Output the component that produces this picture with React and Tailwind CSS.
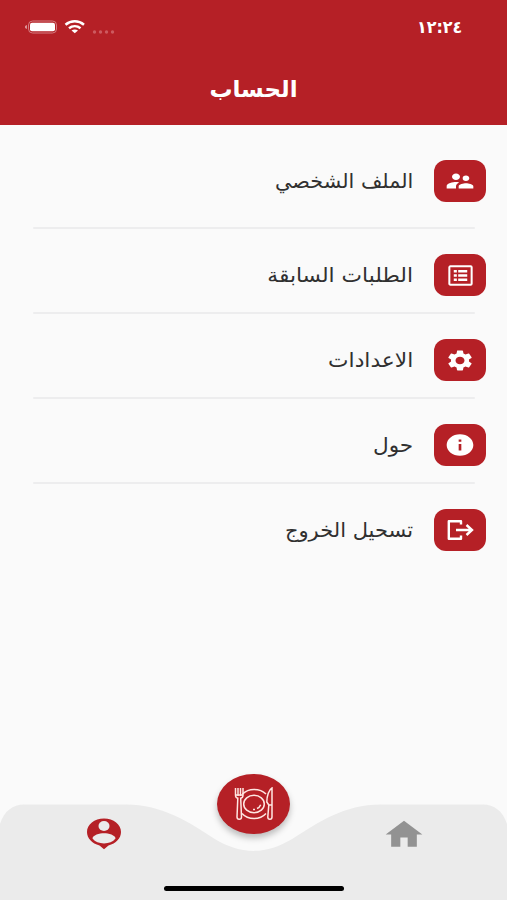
import { MdHome, MdInfo, MdSettings, MdSupervisorAccount } from "react-icons/md";

const ListIcon = ({ className }) => (
    <svg viewBox="0 0 26 22" className={className} fill="none" stroke="currentColor" preserveAspectRatio="none">
        <rect x="1.4" y="1.4" width="23.2" height="19.2" rx="1" strokeWidth="2.1" />
        <path d="M6 6.5h3.2M6 11h3.2M6 15.5h3.2M10.6 6.5H20M10.6 11H20M10.6 15.5H20" strokeWidth="2.7" />
    </svg>
);

const ExitIcon = ({ className }) => (
    <svg viewBox="0 0 26 20" className={className} fill="none" stroke="currentColor" strokeWidth="2.4">
        <path d="M13.5 4.500V1.200H1.300v17.600h12.200v-3.300" strokeLinejoin="round" />
        <path d="M8.500 10h16M19 5l5.500 5-5.500 5" />
    </svg>
);

const PinIcon = ({ className }) => (
    <svg viewBox="0 0 34 32" className={className}>
        <path fill="currentColor" d="M17 .5C7.400.5 0 6.500 0 14c0 6.200 5 11.600 12.500 13.400L17 31.300l4.500-3.900C29 25.600 34 20.200 34 14 34 6.500 26.600.5 17 .5Z" />
        <ellipse cx="17" cy="8" rx="5.500" ry="5" fill="#ebebeb" />
        <path fill="#ebebeb" d="M5.500 20.500c0-3.400 7-5.300 11.500-5.300s11.500 1.900 11.500 5.300C26 23.800 21.700 25.400 17 25.400S8 23.800 5.500 20.500Z" />
    </svg>
);

const PlateIcon = ({ className }) => (
    <svg viewBox="0 0 40 34" className={className} fill="none" stroke="currentColor" strokeWidth="1.500">
        <path d="M8.500 7C11.500 4 15.500 2.400 20 2.400c5 0 9 1.500 12 4.600M8 26.500c3 3.300 7.500 5 12 5s9-1.700 12-5" />
        <ellipse cx="20" cy="17" rx="10.300" ry="8.700" />
        <path d="M19 22.500h2M23 21.500c1.800-.8 3-2 3.700-3.800" />
        <path d="M1.500 1v7c0 2 1 3 2.300 3.200L3 30c0 3 4.500 3 4.500 0l-.8-18.800C8 11 9 10 9 8V1M4 1v8M6.500 1v8M1.500 8H9" />
        <path d="M38 1c-3 1.500-5.200 8-5.200 14l2 3-1 12c0 3 4.200 3 4.200 0V1Z" />
        <path d="M34.500 18H38" />
    </svg>
);

const menu = [
    { label: "الملف الشخصي", Icon: MdSupervisorAccount, icon: "w-8 h-[26px]", text: "scale-x-[1.037]" },
    { label: "الطلبات السابقة", Icon: ListIcon, icon: "w-[25px] h-[21px]", text: "scale-x-[1.088]" },
    { label: "الاعدادات", Icon: MdSettings, icon: "w-[30px] h-[25px]", text: "scale-x-[1.088]" },
    { label: "حول", Icon: MdInfo, icon: "w-8 h-[26px]", text: "scale-x-[1.08]" },
    { label: "تسحيل الخروج", Icon: ExitIcon, icon: "w-[27px] h-5", text: "scale-x-[1.05]" },
];

const App = () => {
    return (
        <div
            dir="rtl"
            className="relative flex flex-col w-[507px] h-[900px] overflow-hidden bg-[#fafafa] font-['DejaVu_Sans',sans-serif]"
        >
            {/* Header */}
            <header className="h-[125px] shrink-0 bg-[#b52026] text-white">
                <div className="flex items-center justify-between h-[54px] pr-[45px] pl-6">
                    <span className="text-[17px] font-bold leading-none origin-right scale-x-[0.94]">١٢:٢٤</span>
                    <div dir="ltr" className="flex items-center">
                        <svg viewBox="0 0 92 18" className="w-[92px] h-[18px]" fill="none">
                            <path d="M2.500 7v4C1 10.500 1 7.500 2.500 7Z" fill="#fff" />
                            <rect x="4.500" y="3" width="28" height="12" rx="4" stroke="#d47c80" />
                            <rect x="6" y="4.800" width="25" height="8.500" rx="2" fill="#fff" />
                            <path d="M41.500 6.700c5.500-4.600 13-4.600 18.500 0M45 10.200c3.400-2.700 8.100-2.700 11.500 0" stroke="#fff" strokeWidth="2.500" />
                            <path d="M47.500 12.500c2-1.500 4.500-1.500 6.500 0L50.800 15.200Z" fill="#fff" />
                            <g fill="#cd5a5f">
                                <circle cx="70.500" cy="14" r="1.700" />
                                <circle cx="76.500" cy="14" r="1.700" />
                                <circle cx="82.500" cy="14" r="1.700" />
                                <circle cx="88.500" cy="14" r="1.700" />
                            </g>
                        </svg>
                    </div>
                </div>
                <h1 className="text-center text-[23px] leading-[70px] font-bold">
                    <span className="inline-block">الحساب</span>
                </h1>
            </header>

            {/* Menu */}
            <ul className="flex flex-col pt-[10px] text-[#303030]">
                {menu.map(({ label, Icon, icon, text }, i) => (
                    <li key={label}>
                        <div className={`flex items-center gap-[21px] pr-[21px] pt-[25px] ${i === 0 ? "pb-[25px]" : "pb-4"}`}>
                            <div className="flex items-center justify-center w-[52px] h-[42px] rounded-[12px] bg-[#b52026] text-white">
                                <Icon className={icon} preserveAspectRatio="none" />
                            </div>
                            <span className={`text-[20px] leading-none origin-right ${text}`}>{label}</span>
                        </div>
                        {i < menu.length - 1 && <div className="h-[2px] mr-8 ml-[33px] rounded bg-[#ededee]" />}
                    </li>
                ))}
            </ul>

            {/* Bottom navigation */}
            <nav dir="ltr" className="relative mt-auto h-24 shrink-0">
                <svg viewBox="0 0 507 96" className="absolute inset-0 w-full h-full">
                    <path fill="#ebebeb" d="M0 96V20C4 7 13 .5 24 .5h102c36 0 64 18 88 34 27 16.500 52 16.500 79 0 25-16 51-34 88-34h102c11 0 20 6.500 24 19.500v76Z" />
                </svg>
                <div className="relative flex justify-between items-start pl-[87px] pr-[81px] pt-[14px]">
                    <PinIcon className="w-[34px] h-8 text-[#b52026]" />
                    <MdHome className="w-11 h-[37px] -mt-[2px] text-[#929292]" preserveAspectRatio="none" />
                </div>
                <div className="absolute left-[217px] -top-[30px] flex items-center justify-center w-[73px] h-[60px] rounded-[50%] bg-[#b52026] text-[#ffe6e2] shadow-[0_4px_6px_rgba(0,0,0,0.25)]">
                    <PlateIcon className="w-10 h-[34px]" />
                </div>
                <div className="absolute left-[164px] bottom-[9px] w-[180px] h-[5px] rounded-full bg-black" />
            </nav>
        </div>
    );
};

export default App;
